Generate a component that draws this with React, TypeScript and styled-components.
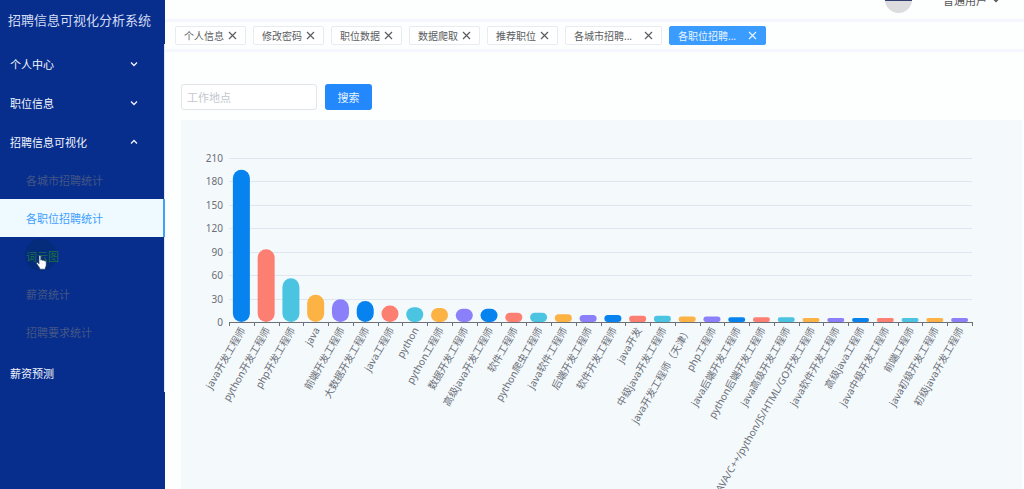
import React, { useLayoutEffect, useRef, useState } from "react";
import styled, { createGlobalStyle } from "styled-components";

const GlobalStyle = createGlobalStyle`
  *, *::before, *::after { box-sizing: border-box; }
  body {
    margin: 0;
    background: #fdfefe;
    font-family: "Noto Sans", "Noto Sans CJK SC", sans-serif;
    color: #555;
    overflow: hidden;
  }
  button, input { font-family: inherit; }
  ul { list-style: none; margin: 0; padding: 0; }
`;

const Page = styled.div`
  display: flex;
  height: 100vh;
  overflow: hidden;
`;

const Sidebar = styled.aside`
  flex: 0 0 165px;
  background: #072e8d;
  overflow: hidden;
`;

const Brand = styled.h1`
  margin: 0;
  height: 44px;
  padding: 0 8px;
  font-size: 13px;
  font-weight: 400;
  line-height: 40px;
  white-space: nowrap;
  color: #d3dcf2;
`;

const Menu = styled.ul`
  border-right: 1px solid #dfe4f0;
`;

const MenuButton = styled.button`
  display: flex;
  align-items: center;
  justify-content: space-between;
  width: 100%;
  height: 39px;
  padding: 0 26px 0 10px;
  border: 0;
  background: transparent;
  color: #f2f5fc;
  font-size: 11px;
  cursor: pointer;
`;

const SubMenu = styled.ul`
  padding-bottom: 2px;
`;

type SubState = "idle" | "active" | "hover";

const subColors: Record<SubState, string> = {
  idle: "#445684",
  active: "#409eff",
  hover: "#1c7048",
};

const SubLink = styled.a<{ $state: SubState }>`
  position: relative;
  display: flex;
  align-items: center;
  height: 38px;
  padding-left: 26px;
  font-size: 11px;
  text-decoration: none;
  color: ${(p) => subColors[p.$state]};
  background: ${(p) => (p.$state === "active" ? "#eefaff" : "transparent")};
  border-right: ${(p) => (p.$state === "active" ? "2px solid #409eff" : "0")};
  margin-right: ${(p) => (p.$state === "active" ? "-1px" : "0")};
`;

const Halo = styled.span`
  position: absolute;
  left: 25px;
  top: 2px;
  width: 32px;
  height: 32px;
  border-radius: 50%;
  background: rgba(0, 40, 90, 0.35);
`;

const LinkText = styled.span`
  position: relative;
`;

const Cursor = styled.svg`
  position: absolute;
  left: 36px;
  top: 18px;
`;

const Main = styled.main`
  flex: 1;
  min-width: 0;
`;

const Header = styled.header`
  display: flex;
  align-items: flex-end;
  justify-content: flex-end;
  height: 19px;
  padding: 0 24px 6px 0;
  overflow: hidden;
`;

const UserButton = styled.button`
  display: flex;
  align-items: center;
  flex: none;
  height: 27px;
  padding: 0;
  border: 0;
  background: transparent;
  color: #555;
  font-size: 11px;
  cursor: pointer;
`;

const UserName = styled.span`
  margin: 0 5px 0 31px;
`;

const TabBar = styled.nav`
  display: flex;
  align-items: center;
  gap: 7px;
  height: 33px;
  padding: 0 10px;
  border-top: 3px solid #f4f7fd;
  border-bottom: 3px solid #f4f7fd;
`;

const Tab = styled.div<{ $active?: boolean }>`
  display: flex;
  align-items: center;
  justify-content: space-between;
  flex: none;
  height: 19px;
  padding: 0 8px;
  border: 1px solid ${(p) => (p.$active ? "#3b9cff" : "#e9ebf0")};
  border-radius: 2px;
  background: ${(p) => (p.$active ? "#3b9cff" : "#fff")};
  color: ${(p) => (p.$active ? "#e8f4ff" : "#5a5c60")};
`;

const TabLabel = styled.a<{ $wide?: boolean }>`
  width: ${(p) => (p.$wide ? "70px" : "44px")};
  font-size: 10px;
  line-height: 16px;
  white-space: nowrap;
  text-decoration: none;
  color: inherit;
`;

const TabClose = styled.button`
  display: flex;
  padding: 0;
  border: 0;
  background: transparent;
  color: inherit;
  cursor: pointer;
`;

const Content = styled.section`
  padding: 32px 2px 0 16px;
`;

const SearchForm = styled.form`
  display: flex;
  gap: 8px;
  margin-bottom: 10px;
`;

const SearchInput = styled.input`
  width: 136px;
  height: 26px;
  padding: 0 5px;
  border: 1px solid #e2e4e9;
  border-radius: 3px;
  background: #fff;
  font-size: 11px;
  outline: none;
  &::placeholder { color: #c3c6cd; opacity: 1; }
`;

const SearchButton = styled.button`
  width: 47px;
  height: 26px;
  padding: 0;
  border: 0;
  border-radius: 3px;
  background: #2288fb;
  color: #e8f3ff;
  font-size: 11px;
  cursor: pointer;
`;

const ChartPanel = styled.div`
  height: 460px;
  background: #f4f9fc;
  overflow: hidden;
`;

const ChartSvg = styled.svg`
  display: block;
  width: 100%;
  height: 100%;
  font-family: "Noto Sans", "Noto Sans CJK SC", sans-serif;
  font-size: 10px;
  fill: #6a6e77;
`;

const palette = ["#0783ef", "#fd7f72", "#4bc4e2", "#fdb244", "#8b80fa"];

const data: [string, number][] = [
  ["java开发工程师", 195],
  ["python开发工程师", 93],
  ["php开发工程师", 56],
  ["java", 35],
  ["前端开发工程师", 29],
  ["大数据开发工程师", 27],
  ["java工程师", 21],
  ["python", 19],
  ["python工程师", 18],
  ["数据开发工程师", 17],
  ["高级java开发工程师", 17],
  ["软件工程师", 12],
  ["python爬虫工程师", 12],
  ["java软件工程师", 10],
  ["后端开发工程师", 9],
  ["软件开发工程师", 9],
  ["java开发", 8],
  ["中级java开发工程师", 8],
  ["java开发工程师（天津）", 7],
  ["php工程师", 7],
  ["java后端开发工程师", 6],
  ["python后端开发工程师", 6],
  ["java高级开发工程师", 6],
  ["JAVA/C++/python/JS/HTML/GO开发工程师", 5],
  ["java软件开发工程师", 5],
  ["高级java工程师", 5],
  ["java中级开发工程师", 5],
  ["前端工程师", 5],
  ["java初级开发工程师", 5],
  ["初级java开发工程师", 5],
];

const AXIS_MAX = 210;
const ticks = [0, 30, 60, 90, 120, 150, 180, 210];
const plot = { left: 48, right: 50, top: 38, bottom: 202 };
const BAR_WIDTH = 17;

function BarChart() {
  const panel = useRef<HTMLDivElement>(null);
  const [width, setWidth] = useState(0);

  useLayoutEffect(() => {
    const node = panel.current;
    if (!node) return;
    const measure = () => setWidth(node.clientWidth);
    measure();
    const observer = new ResizeObserver(measure);
    observer.observe(node);
    return () => observer.disconnect();
  }, []);

  const end = width - plot.right;
  const step = (end - plot.left) / data.length;
  const scale = (plot.bottom - plot.top) / AXIS_MAX;
  const yOf = (value: number) => Math.round(plot.bottom - value * scale);

  return (
    <ChartPanel ref={panel}>
      {width > 0 && (
        <ChartSvg role="img" aria-label="各职位招聘统计">
          {ticks.map((tick) => (
            <g key={tick}>
              {tick > 0 && (
                <line x1={plot.left} x2={end} y1={yOf(tick) + 0.5} y2={yOf(tick) + 0.5} stroke="#e0e6f1" />
              )}
              <text x={42} y={yOf(tick) + 4} textAnchor="end">{tick}</text>
            </g>
          ))}
          {data.map(([name, value], i) => {
            const center = plot.left + step * (i + 0.5);
            const height = value * scale;
            const radius = Math.min(BAR_WIDTH, height) / 2;
            return (
              <g key={name}>
                <rect
                  x={center - BAR_WIDTH / 2}
                  y={plot.bottom - height}
                  width={BAR_WIDTH}
                  height={height}
                  rx={radius}
                  fill={palette[i % palette.length]}
                />
                <text
                  textAnchor="end"
                  dominantBaseline="central"
                  transform={`translate(${center + 1} ${plot.bottom + 6}) rotate(-60)`}
                >
                  {name}
                </text>
              </g>
            );
          })}
          <line x1={plot.left} x2={end} y1={plot.bottom + 0.5} y2={plot.bottom + 0.5} stroke="#6e7079" />
          {Array.from({ length: data.length + 1 }, (_, i) => {
            const x = Math.round(plot.left + step * i) + 0.5;
            return <line key={i} x1={x} x2={x} y1={plot.bottom} y2={plot.bottom + 4} stroke="#6e7079" />;
          })}
        </ChartSvg>
      )}
    </ChartPanel>
  );
}

const Chevron = ({ up = false }: { up?: boolean }) => (
  <svg width="8" height="8" viewBox="0 0 8 8" fill="none" stroke="currentColor" strokeWidth="1.3" aria-hidden="true">
    <path d={up ? "M1 5.5 4 2.5 7 5.5" : "M1 2.5 4 5.5 7 2.5"} />
  </svg>
);

const CloseIcon = () => (
  <svg width="9" height="9" viewBox="0 0 9 9" fill="none" stroke="currentColor" strokeWidth="1.2" aria-hidden="true">
    <path d="M1 1 8 8M8 1 1 8" />
  </svg>
);

const Avatar = () => (
  <svg width="27" height="27" viewBox="0 0 27 27" aria-hidden="true">
    <clipPath id="avatar-clip"><circle cx="13.5" cy="13.5" r="13.5" /></clipPath>
    <g clipPath="url(#avatar-clip)">
      <rect width="27" height="27" fill="#dcdcde" />
      <rect width="27" height="15" fill="#323d70" />
    </g>
  </svg>
);

const HandCursor = () => (
  <Cursor width="11" height="15" viewBox="0 0 11 15" aria-hidden="true">
    <path
      d="M3 1.2C3 .2 4.8.2 4.8 1.2V5.2C5.2 4.6 6.4 4.7 6.6 5.5 7.2 5 8.2 5.2 8.4 6 9.2 5.7 10.2 6.1 10.2 7V10C10.2 11.5 9.3 12 9.1 14.2H4C3.8 12.4 1.8 10.8.6 8.6.2 7.6 1.4 7 2.1 7.8L3 8.8Z"
      fill="#fff"
      stroke="#27365c"
      strokeWidth="0.6"
    />
  </Cursor>
);

const subItems: { label: string; state: SubState }[] = [
  { label: "各城市招聘统计", state: "idle" },
  { label: "各职位招聘统计", state: "active" },
  { label: "词云图", state: "hover" },
  { label: "薪资统计", state: "idle" },
  { label: "招聘要求统计", state: "idle" },
];

const tabs = [
  { label: "个人信息" },
  { label: "修改密码" },
  { label: "职位数据" },
  { label: "数据爬取" },
  { label: "推荐职位" },
  { label: "各城市招聘...", wide: true },
  { label: "各职位招聘...", wide: true, active: true },
];

export default function App() {
  return (
    <>
      <GlobalStyle />
      <Page>
        <Sidebar>
          <Brand>招聘信息可视化分析系统</Brand>
          <Menu>
            <li><MenuButton>个人中心<Chevron /></MenuButton></li>
            <li><MenuButton>职位信息<Chevron /></MenuButton></li>
            <li>
              <MenuButton aria-expanded="true">招聘信息可视化<Chevron up /></MenuButton>
              <SubMenu>
                {subItems.map(({ label, state }) => (
                  <li key={label}>
                    <SubLink href="#" $state={state}>
                      {state === "hover" && <Halo />}
                      <LinkText>{label}</LinkText>
                      {state === "hover" && <HandCursor />}
                    </SubLink>
                  </li>
                ))}
              </SubMenu>
            </li>
            <li><MenuButton>薪资预测</MenuButton></li>
          </Menu>
        </Sidebar>
        <Main>
          <Header>
            <UserButton>
              <Avatar />
              <UserName>普通用户</UserName>
              <Chevron />
            </UserButton>
          </Header>
          <TabBar>
            {tabs.map(({ label, wide, active }) => (
              <Tab key={label} $active={active}>
                <TabLabel href="#" $wide={wide}>{label}</TabLabel>
                <TabClose aria-label={`关闭${label}`}><CloseIcon /></TabClose>
              </Tab>
            ))}
          </TabBar>
          <Content>
            <SearchForm onSubmit={(e) => e.preventDefault()}>
              <SearchInput aria-label="工作地点" placeholder="工作地点" />
              <SearchButton>搜索</SearchButton>
            </SearchForm>
            <BarChart />
          </Content>
        </Main>
      </Page>
    </>
  );
}
